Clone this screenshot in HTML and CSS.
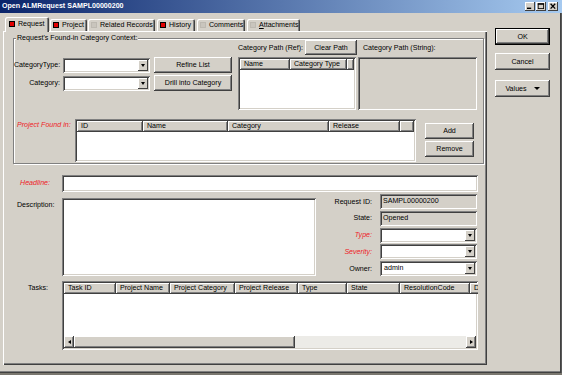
FILE: index.html
```html
<!DOCTYPE html>
<html lang="en">
<head>
    <meta charset="UTF-8">
    <meta name="viewport" content="width=device-width, initial-scale=1.0">
    <title>Open ALMRequest SAMPL00000200</title>
    <link rel="stylesheet" href="styles.css">
</head>
<body>
    <div class="window">

        <!-- Title Bar -->
        <div class="titlebar">
            <span class="title">Open ALMRequest SAMPL00000200</span>
            <div class="caption-buttons">
                <span class="cap-btn">
                    <svg width="10" height="9" viewBox="0 0 10 9"><rect x="2" y="5.6" width="4.2" height="1.4" fill="#000"/></svg>
                </span>
                <span class="cap-btn">
                    <svg width="10" height="9" viewBox="0 0 10 9"><rect x="2.2" y="1.8" width="5.4" height="4.8" fill="none" stroke="#000" stroke-width="0.8"/><rect x="1.8" y="1.4" width="6.2" height="1.3" fill="#000"/></svg>
                </span>
                <span class="cap-btn close">
                    <svg width="10" height="9" viewBox="0 0 10 9"><path d="M2.6 1.8 L7.2 6.6 M7.2 1.8 L2.6 6.6" stroke="#000" stroke-width="1.3"/></svg>
                </span>
            </div>
        </div>

        <div class="client">
            <div class="tabs-area">

                <!-- Tabs -->
                <div class="tab-strip">
                    <div class="tab selected tab-request"><span class="tab-icon red"></span>Request</div>
                    <div class="tab tab-project"><span class="tab-icon red"></span>Project</div>
                    <div class="tab tab-related"><span class="tab-icon grey"></span>Related Records</div>
                    <div class="tab tab-history"><span class="tab-icon red"></span>History</div>
                    <div class="tab tab-comments"><span class="tab-icon grey"></span>Comments</div>
                    <div class="tab tab-attach"><span class="tab-icon grey"></span><span><u>A</u>ttachments</span></div>
                </div>

                <div class="tab-panel">

                    <!-- Category Context Group -->
                    <div class="group">
                        <span class="group-title">Request's Found-in Category Context:</span>

                        <div class="group-top">
                            <div class="col-filter">
                                <div class="filter-row">
                                    <span class="filter-label">CategoryType:</span>
                                    <div class="combo combo-filter"><span class="combo-value"></span><span class="combo-btn"></span></div>
                                    <button class="btn btn-filter">Refine List</button>
                                </div>
                                <div class="filter-row">
                                    <span class="filter-label">Category:</span>
                                    <div class="combo combo-filter"><span class="combo-value"></span><span class="combo-btn"></span></div>
                                    <button class="btn btn-filter">Drill into Category</button>
                                </div>
                            </div>

                            <div class="col-path">
                                <div class="path-head">
                                    <span>Category Path (Ref):</span>
                                    <button class="btn btn-clear">Clear Path</button>
                                </div>
                                <div class="listview path-list">
                                    <div class="lv-header">
                                        <span>Name</span><span>Category Type</span><span></span>
                                    </div>
                                    <div class="lv-body"></div>
                                </div>
                            </div>

                            <div class="col-string">
                                <div class="string-head">Category Path (String):</div>
                                <div class="string-box"></div>
                            </div>
                        </div>

                        <div class="project-row">
                            <span class="project-label required">Project Found in:</span>
                            <div class="listview project-list">
                                <div class="lv-header">
                                    <span>ID</span><span>Name</span><span>Category</span><span>Release</span><span></span>
                                </div>
                                <div class="lv-body"></div>
                            </div>
                            <div class="project-buttons">
                                <button class="btn">Add</button>
                                <button class="btn">Remove</button>
                            </div>
                        </div>
                    </div>

                    <!-- Headline -->
                    <div class="field-row headline-row">
                        <span class="row-label headline-label required">Headline:</span>
                        <div class="input headline-input"></div>
                    </div>

                    <!-- Description and Properties -->
                    <div class="field-row desc-row">
                        <span class="row-label desc-label">Description:</span>
                        <div class="input desc-text"></div>
                        <div class="props">
                            <span class="prop-label">Request ID:</span>
                            <div class="field readonly">SAMPL00000200</div>
                            <span class="prop-label">State:</span>
                            <div class="field readonly">Opened</div>
                            <span class="prop-label required">Type:</span>
                            <div class="combo"><span class="combo-value"></span><span class="combo-btn"></span></div>
                            <span class="prop-label required">Severity:</span>
                            <div class="combo"><span class="combo-value"></span><span class="combo-btn"></span></div>
                            <span class="prop-label">Owner:</span>
                            <div class="combo"><span class="combo-value">admin</span><span class="combo-btn"></span></div>
                        </div>
                    </div>

                    <!-- Tasks -->
                    <div class="field-row tasks-row">
                        <span class="row-label tasks-label">Tasks:</span>
                        <div class="listview tasks-list">
                            <div class="lv-header">
                                <span>Task ID</span><span>Project Name</span><span>Project Category</span><span>Project Release</span><span>Type</span><span>State</span><span>ResolutionCode</span><span>D</span>
                            </div>
                            <div class="lv-body"></div>
                            <div class="hscroll">
                                <span class="sb-arrow"><span class="arrow-left"></span></span>
                                <span class="sb-thumb"></span>
                                <span class="sb-track"></span>
                                <span class="sb-arrow"><span class="arrow-right"></span></span>
                            </div>
                        </div>
                    </div>

                </div>
            </div>

            <!-- Dialog Buttons -->
            <div class="side-buttons">
                <button class="btn btn-side btn-default">OK</button>
                <button class="btn btn-side btn-cancel">Cancel</button>
                <button class="btn btn-side btn-values">Values <span class="values-arrow"></span></button>
            </div>
        </div>

        <div class="desktop-strip"></div>
    </div>
</body>
</html>
```

FILE: styles.css
```css
* {
    box-sizing: border-box;
}

body {
    margin: 0;
    background: #7a776f;
    font-family: "Liberation Sans", Arial, sans-serif;
    font-size: 7.1px;
    color: #000;
}

/* Window */
.window {
    width: 562px;
    height: 375px;
    display: flex;
    flex-direction: column;
    background: #d4d0c8;
}

/* Title Bar */
.titlebar {
    flex: none;
    height: 13px;
    display: flex;
    align-items: center;
    justify-content: space-between;
    padding: 0 4px 0 2px;
    background: linear-gradient(to right, #0a246a, #a6caf0);
}

.title {
    color: #fff;
    font-weight: bold;
    line-height: 13px;
}

.caption-buttons {
    display: flex;
}

.cap-btn {
    display: flex;
    width: 10px;
    height: 9px;
    background: #d4d0c8;
    box-shadow: inset -1px -1px #404040, inset 1px 1px #fff;
}

.cap-btn + .cap-btn {
    margin-left: 1px;
}

.cap-btn.close {
    margin-left: 2px;
}

/* Client Area */
.client {
    flex: none;
    height: 360px;
    display: flex;
    padding-left: 3px;
    box-shadow: inset -1px 0 #5a5a5a, inset -2px 0 #404040, inset 0 -1px #404040, inset 0 -2px #808080;
}

.tabs-area {
    width: 484px;
    display: flex;
    flex-direction: column;
}

/* Tabs */
.tab-strip {
    margin-top: 4px;
    height: 14px;
    display: flex;
    align-items: flex-end;
}

.tab {
    position: relative;
    height: 12px;
    display: flex;
    align-items: center;
    gap: 3px;
    padding-left: 3px;
    white-space: nowrap;
    background: #d4d0c8;
    border-radius: 2px 2px 0 0;
    box-shadow: inset 1px 1px #fff, inset -1px 0 #404040, inset -2px 0 #808080;
}

.tab.selected {
    height: 15px;
    margin-bottom: -1px;
    padding: 0 0 2px 4px;
    z-index: 1;
}

.tab-request { margin-left: 2px; width: 44px; }
.tab-project { margin-left: 1px; width: 37px; }
.tab-related { margin-left: 1px; width: 67px; }
.tab-history { margin-left: 2px; width: 38px; }
.tab-comments { margin-left: 2px; width: 48px; }
.tab-attach { margin-left: 2px; width: 53px; }

.tab-icon {
    flex: none;
    width: 6px;
    height: 6px;
}

.tab-icon.red {
    background: #e00000;
    border: 1px solid #000;
}

.tab-icon.grey {
    background: #c9c5bd;
    border: 1px solid #bdb9b1;
}

.tab-panel {
    height: 334px;
    display: flex;
    flex-direction: column;
    box-shadow: inset 1px 1px #fff, inset -1px -1px #404040, inset -2px -2px #808080;
}

/* Shared 3D Controls */
.btn {
    display: flex;
    align-items: center;
    justify-content: center;
    padding: 0;
    border: 0;
    font: inherit;
    color: #000;
    background: #d4d0c8;
    white-space: nowrap;
    box-shadow: inset -1px -1px #404040, inset 1px 1px #fff, inset -2px -2px #808080;
}

.input,
.combo,
.field,
.listview,
.string-box {
    box-shadow: inset 1px 1px #808080, inset -1px -1px #fff, inset 2px 2px #404040, inset -2px -2px #d4d0c8;
}

.input {
    background: #fff;
}

.combo {
    display: flex;
    height: 15px;
    padding: 2px;
    background: #fff;
}

.combo-value {
    flex: 1;
    padding-left: 2px;
    line-height: 11px;
}

.combo-btn {
    flex: none;
    width: 10px;
    display: flex;
    align-items: center;
    justify-content: center;
    background: #d4d0c8;
    box-shadow: inset -1px -1px #404040, inset 1px 1px #fff;
}

.combo-btn::after {
    content: "";
    border-left: 2.5px solid transparent;
    border-right: 2.5px solid transparent;
    border-top: 3px solid #000;
}

.field.readonly {
    height: 15px;
    padding-left: 3px;
    line-height: 14px;
    background: #d4d0c8;
}

.required {
    color: #ee2026;
    font-style: italic;
}

/* List Views */
.listview {
    display: flex;
    flex-direction: column;
    padding: 2px;
    background: #fff;
    overflow: hidden;
}

.lv-header {
    flex: none;
    display: grid;
    height: 11px;
}

.lv-header span {
    padding-left: 4px;
    line-height: 11px;
    white-space: nowrap;
    overflow: hidden;
    background: #d4d0c8;
    box-shadow: inset -1px -1px #404040, inset 1px 1px #fff, inset -2px -2px #808080;
}

.lv-body {
    flex: 1;
}

/* Group Box */
.group {
    position: relative;
    width: 471px;
    margin: 7px 0 0 10px;
    padding-bottom: 1px;
    border: 1px solid #808080;
    box-shadow: inset 1px 1px #fff, 1px 1px #fff;
}

.group-title {
    position: absolute;
    top: -5px;
    left: 2px;
    padding: 0 1px;
    line-height: 9px;
    background: #d4d0c8;
}

.group-top {
    display: flex;
    height: 72px;
}

.col-filter {
    width: 219px;
    padding-top: 18px;
}

.filter-row {
    display: flex;
    align-items: center;
    height: 16px;
}

.filter-row + .filter-row {
    margin-top: 2px;
}

.filter-label {
    width: 47px;
    padding-right: 1px;
    text-align: right;
    white-space: nowrap;
}

.combo-filter {
    width: 87px;
    margin-left: 2px;
}

.btn-filter {
    width: 78px;
    height: 16px;
    margin-left: 4px;
}

.col-path {
    width: 119px;
    margin-left: 5px;
}

.path-head,
.string-head {
    height: 17px;
    display: flex;
    align-items: center;
    white-space: nowrap;
}

.path-head {
    justify-content: space-between;
}

.btn-clear {
    width: 52px;
    height: 15px;
}

.path-list {
    width: 118px;
    height: 53px;
    margin-top: 1px;
}

.path-list .lv-header {
    grid-template-columns: 50px 57px 1fr;
}

.col-string {
    width: 119px;
    margin-left: 1px;
}

.string-head {
    padding-left: 5px;
}

.string-box {
    height: 53px;
    margin-top: 1px;
    background: #d4d0c8;
}

.project-row {
    display: flex;
    margin-top: 8px;
}

.project-label {
    width: 61px;
    margin-top: 2px;
    padding-left: 3px;
    line-height: 9px;
    white-space: nowrap;
}

.project-list {
    width: 341px;
    height: 43px;
}

.project-list .lv-header {
    grid-template-columns: 66px 85px 101px 71px 1fr;
}

.project-buttons {
    display: flex;
    flex-direction: column;
    gap: 2px;
    margin: 4px 0 0 9px;
}

.project-buttons .btn {
    width: 49px;
    height: 16px;
}

/* Form Rows */
.field-row {
    display: flex;
}

.row-label {
    flex: none;
    width: 59px;
    line-height: 9px;
    white-space: nowrap;
}

.headline-row {
    align-items: center;
    margin-top: 11px;
}

.headline-label {
    padding-right: 12px;
    text-align: right;
}

.headline-input {
    width: 416px;
    height: 17px;
}

.desc-row {
    align-items: flex-start;
    margin-top: 2px;
}

.desc-label {
    margin-top: 7px;
    padding-left: 14px;
}

.desc-text {
    width: 254px;
    height: 78px;
    margin-top: 4px;
}

.props {
    display: grid;
    grid-template-columns: 64px 97px;
    grid-auto-rows: 15px;
    row-gap: 1.75px;
}

.prop-label {
    align-self: center;
    padding-right: 8px;
    text-align: right;
}

.tasks-row {
    margin-top: 5px;
}

.tasks-label {
    margin-top: 3px;
    padding-right: 14px;
    text-align: right;
}

.tasks-list {
    width: 416px;
    height: 69px;
}

.tasks-list .lv-header {
    grid-template-columns: 52px 54px 65px 63px 49px 53px 70px 20px;
}

/* Scroll Bar */
.hscroll {
    flex: none;
    display: flex;
    height: 12px;
}

.sb-arrow,
.sb-thumb {
    background: #d4d0c8;
    box-shadow: inset -1px -1px #404040, inset 1px 1px #fff, inset -2px -2px #808080;
}

.sb-arrow {
    width: 10px;
    display: flex;
    align-items: center;
    justify-content: center;
}

.sb-thumb {
    width: 221px;
}

.sb-track {
    flex: 1;
    background: #ecebe7;
}

.arrow-left {
    border-top: 2.5px solid transparent;
    border-bottom: 2.5px solid transparent;
    border-right: 3px solid #000;
}

.arrow-right {
    border-top: 2.5px solid transparent;
    border-bottom: 2.5px solid transparent;
    border-left: 3px solid #000;
}

/* Dialog Buttons */
.side-buttons {
    display: flex;
    flex-direction: column;
    margin-left: 8px;
    padding-top: 15px;
}

.btn-side {
    width: 55px;
    height: 17px;
}

.btn-default {
    box-shadow: inset 0 0 0 1px #000, inset -2px -2px #404040, inset 2px 2px #fff, inset -3px -3px #808080;
}

.btn-cancel {
    margin-top: 8px;
}

.btn-values {
    margin-top: 10px;
    gap: 7px;
}

.values-arrow {
    border-left: 3px solid transparent;
    border-right: 3px solid transparent;
    border-top: 3px solid #000;
}

.desktop-strip {
    flex: 1;
    background: #7a776f;
}
```
